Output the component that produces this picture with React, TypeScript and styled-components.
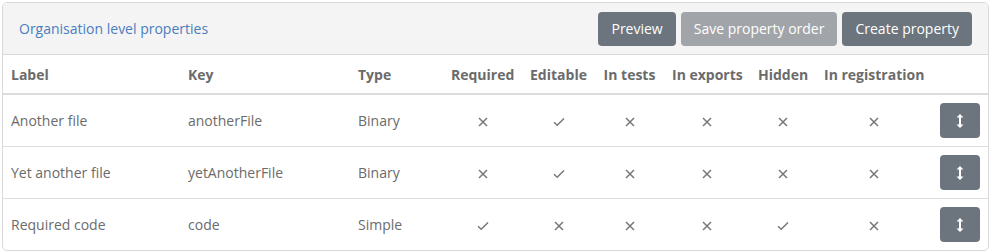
import React from 'react'
import styled, { createGlobalStyle } from 'styled-components'

interface Property {
  label: string,
  key: string,
  type: string,
  flags: boolean[]
}

const properties: Property[] = [
  { label: 'Another file', key: 'anotherFile', type: 'Binary', flags: [false, true, false, false, false, false] },
  { label: 'Yet another file', key: 'yetAnotherFile', type: 'Binary', flags: [false, true, false, false, false, false] },
  { label: 'Required code', key: 'code', type: 'Simple', flags: [true, false, false, false, true, false] },
]

const flagColumns = [
  { title: 'Required', width: 79 },
  { title: 'Editable', width: 73 },
  { title: 'In tests', width: 69 },
  { title: 'In exports', width: 86 },
  { title: 'Hidden', width: 66 },
  { title: 'In registration', width: 116 },
]

const GlobalStyle = createGlobalStyle`
  body {
    margin: 0;
    padding: 2px;
    font-family: "Open Sans", "Liberation Sans", sans-serif;
    font-size: 14px;
    background: #fff;
  }
`

const Card = styled.div`
  width: 987px;
  border: 1px solid #d9d9d9;
  border-radius: 5px;
  overflow: hidden;
  box-sizing: border-box;
`

const CardHeader = styled.div`
  display: flex;
  align-items: center;
  justify-content: space-between;
  height: 51px;
  padding: 0 16px;
  background: #f4f4f4;
  border-bottom: 1px solid #d9d9d9;
`

const Title = styled.span`
  color: #4a7dc0;
  font-size: 14px;
`

const Toolbar = styled.div`
  display: flex;
  gap: 5px;
`

const Button = styled.button<{ $disabled?: boolean }>`
  height: 34px;
  padding: 0 13px;
  border: none;
  border-radius: 4px;
  font-family: inherit;
  font-size: 14px;
  color: #fff;
  background: ${p => p.$disabled ? '#a1a5a9' : '#6c757d'};
`

const Table = styled.table`
  width: 100%;
  border-collapse: collapse;
  table-layout: fixed;
  color: #6b6b6b;
`

const Th = styled.th<{ $center?: boolean }>`
  height: 37px;
  padding: 1px 8px 0;
  font-weight: 700;
  text-align: ${p => p.$center ? 'center' : 'left'};
  border-bottom: 2px solid #dcdcdc;
  white-space: nowrap;
`

const Td = styled.td<{ $center?: boolean }>`
  height: 51px;
  padding: 0 8px;
  text-align: ${p => p.$center ? 'center' : 'left'};
  border-top: 1px solid #dedede;
  vertical-align: middle;
`

const Row = styled.tr`
  &:first-child td {
    border-top: none;
  }
`

const SortButton = styled.button`
  width: 40px;
  height: 35px;
  border: none;
  border-radius: 4px;
  background: #6c757d;
  display: flex;
  align-items: center;
  justify-content: center;
  padding: 0;
`

const Mark = ({ on }: { on: boolean }) => on ? (
  <svg width="12" height="10" viewBox="0 0 12 10" style={{ verticalAlign: 'middle' }}>
    <path d="M1 5.2 L4.2 8.2 L11 1.5" fill="none" stroke="#777" strokeWidth="1.5" />
  </svg>
) : (
  <svg width="10" height="10" viewBox="0 0 10 10" style={{ verticalAlign: 'middle' }}>
    <path d="M1 1 L9 9 M9 1 L1 9" fill="none" stroke="#777" strokeWidth="1.5" />
  </svg>
)

const ArrowsIcon = () => (
  <svg width="8" height="16" viewBox="0 0 8 16">
    <path d="M4 2 V14" stroke="#fff" strokeWidth="2" />
    <path d="M0.5 4.5 L4 1 L7.5 4.5 Z M0.5 11.5 L4 15 L7.5 11.5 Z" fill="#fff" />
  </svg>
)

const App = () => {
  return (
    <>
      <GlobalStyle />
      <Card>
        <CardHeader>
          <Title>Organisation level properties</Title>
          <Toolbar>
            <Button>Preview</Button>
            <Button $disabled>Save property order</Button>
            <Button>Create property</Button>
          </Toolbar>
        </CardHeader>
        <Table>
          <colgroup>
            <col style={{ width: 177 }} />
            <col style={{ width: 170 }} />
            <col style={{ width: 93 }} />
            {flagColumns.map(c => <col key={c.title} style={{ width: c.width }} />)}
            <col />
          </colgroup>
          <thead>
            <tr>
              <Th>Label</Th>
              <Th>Key</Th>
              <Th>Type</Th>
              {flagColumns.map(c => <Th $center key={c.title}>{c.title}</Th>)}
              <Th />
            </tr>
          </thead>
          <tbody>
            {properties.map(p => (
              <Row key={p.key}>
                <Td>{p.label}</Td>
                <Td>{p.key}</Td>
                <Td>{p.type}</Td>
                {p.flags.map((f, i) => <Td $center key={i}><Mark on={f} /></Td>)}
                <Td>
                  <SortButton><ArrowsIcon /></SortButton>
                </Td>
              </Row>
            ))}
          </tbody>
        </Table>
      </Card>
    </>
  )
}

export default App
